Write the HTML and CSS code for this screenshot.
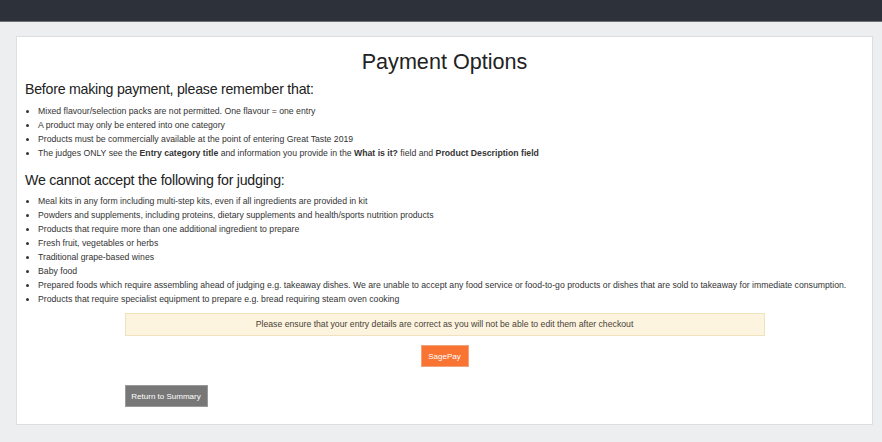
FILE: index.html
```html
<!DOCTYPE html>
<html lang="en">
<head>
  <meta charset="UTF-8">
  <title>Payment Options</title>
  <link rel="stylesheet" href="styles.css">
</head>
<body>

  <div class="topbar"></div>

  <div class="page">
    <div class="card">
      <h1>Payment Options</h1>

      <h2 class="first">Before making payment, please remember that:</h2>
      <ul>
        <li>Mixed flavour/selection packs are not permitted. One flavour = one entry</li>
        <li>A product may only be entered into one category</li>
        <li>Products must be commercially available at the point of entering Great Taste 2019</li>
        <li>The judges ONLY see the <b>Entry category title</b> and information you provide in the <b>What is it?</b> field and <b>Product Description field</b></li>
      </ul>

      <h2 class="second">We cannot accept the following for judging:</h2>
      <ul>
        <li>Meal kits in any form including multi-step kits, even if all ingredients are provided in kit</li>
        <li>Powders and supplements, including proteins, dietary supplements and health/sports nutrition products</li>
        <li>Products that require more than one additional ingredient to prepare</li>
        <li>Fresh fruit, vegetables or herbs</li>
        <li>Traditional grape-based wines</li>
        <li>Baby food</li>
        <li>Prepared foods which require assembling ahead of judging e.g. takeaway dishes. We are unable to accept any food service or food-to-go products or dishes that are sold to takeaway for immediate consumption.</li>
        <li>Products that require specialist equipment to prepare e.g. bread requiring steam oven cooking</li>
      </ul>

      <div class="checkout">
        <div class="notice">Please ensure that your entry details are correct as you will not be able to edit them after checkout</div>
        <div class="pay-row">
          <button class="btn-pay">SagePay</button>
        </div>
        <button class="btn-back">Return to Summary</button>
      </div>
    </div>
  </div>

</body>
</html>
```

FILE: styles.css
```css
body {
  margin: 0;
  font-family: 'Liberation Sans', Arial, sans-serif;
  background: #eceef0;
  color: #222;
}

.topbar {
  height: 21px;
  background: #2d3139;
  border-bottom: 1px solid #6b7079;
}

.page {
  padding: 14px 9px 17px 16px;
}

.card {
  background: #fff;
  border: 1px solid #dcdee0;
  padding: 12px 8px 17px 8px;
}

h1 {
  margin: 0;
  text-align: center;
  font-size: 21.6px;
  font-weight: normal;
  line-height: 25px;
  color: #222;
}

h2 {
  margin: 6px 0 6px 0;
  font-size: 14.2px;
  letter-spacing: -0.25px;
  font-weight: normal;
  line-height: 18px;
  color: #222;
}

h2.second {
  margin: 11px 0 5px 0;
}

ul {
  margin: 0;
  padding-left: 13px;
  font-size: 8.7px;
  line-height: 14px;
  color: #333;
}

.checkout {
  width: 640px;
  margin: 7px auto 0 auto;
}

.notice {
  background: #fcf4de;
  border: 1px solid #efe2bd;
  height: 21px;
  line-height: 21px;
  text-align: center;
  font-size: 8.7px;
  color: #4a4238;
}

.pay-row {
  display: flex;
  justify-content: center;
  margin-top: 9px;
}

button {
  font-family: inherit;
  font-size: 8px;
  color: #fff;
  height: 22px;
  padding: 0;
  cursor: pointer;
}

.btn-pay {
  background: #f97433;
  border: 1px solid #f0a37a;
  width: 48px;
}

.btn-back {
  display: block;
  margin-top: 18px;
  background: #777;
  border: 1px solid #9a9a9a;
  width: 83px;
}
```
